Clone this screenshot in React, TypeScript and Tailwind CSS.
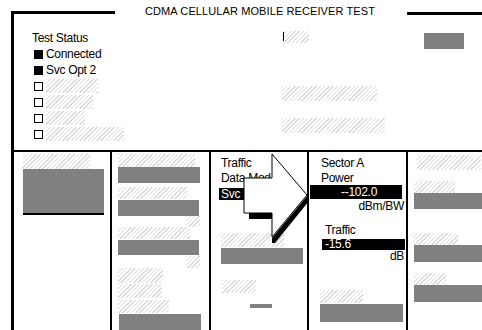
import React from 'react';

// light diagonal hatch used for the blanked-out fields
const HATCH = 'bg-[repeating-linear-gradient(135deg,#dadada_0px,#dadada_1px,#ffffff_1px,#ffffff_3px)]';
const GRAY = 'bg-[#808080]';

function Arrow() {
  return (
    <svg className="absolute left-0 top-0 pointer-events-none" width={482} height={330} viewBox="0 0 482 330">
      {/* shadows */}
      <rect x={249} y={213} width={23} height={6} fill="#000" />
      <polygon points="272,238 307,196 309,201 275,243 272,243" fill="#000" />
      {/* arrow body */}
      <polygon
        points="272,154 307,195 272,237 272,213 244,213 244,178 272,178"
        fill="#fff"
        stroke="#000"
        strokeWidth={1}
      />
    </svg>
  );
}

export default function App() {
  return (
    <div className="relative w-[482px] h-[330px] overflow-hidden bg-white text-black font-['Liberation_Sans',Arial,sans-serif] text-[12px] tracking-[-0.3px]">
      <div className="ml-[11px] mt-[11px] h-[319px] border-l-[3px] border-black flex flex-col">
        {/* title row */}
        <div className="h-[3px] flex items-center shrink-0">
          <div className="w-[101px] h-[3px] bg-black" />
          <span className="ml-[30px] -mt-[3px] text-[11px] leading-none tracking-[0.1px] whitespace-nowrap">
            CDMA CELLULAR MOBILE RECEIVER TEST
          </span>
          <div className="flex-1" />
          <div className="w-[75px] h-[3px] bg-black mt-[2px]" />
        </div>

        {/* upper panel */}
        <div className="h-[136px] flex shrink-0">
          <div className="w-[268px] pl-[18px] pt-[16px] leading-[16px]">
            <div>Test Status</div>
            <div className="flex items-center">
              <div className="w-[9px] h-[9px] bg-black ml-[2px] mr-[3px]" />
              <span>Connected</span>
            </div>
            <div className="flex items-center">
              <div className="w-[9px] h-[9px] bg-black ml-[2px] mr-[3px]" />
              <span>Svc Opt 2</span>
            </div>
            <div className="flex items-center h-[16px]">
              <div className="w-[9px] h-[9px] border border-black ml-[2px] mr-[3px]" />
              <div className={`${HATCH} w-[52px] h-[14px]`} />
            </div>
            <div className="flex items-center h-[16px]">
              <div className="w-[9px] h-[9px] border border-black ml-[2px] mr-[3px]" />
              <div className={`${HATCH} w-[47px] h-[14px]`} />
            </div>
            <div className="flex items-center h-[16px]">
              <div className="w-[9px] h-[9px] border border-black ml-[2px] mr-[3px]" />
              <div className={`${HATCH} w-[39px] h-[14px]`} />
            </div>
            <div className="flex items-center h-[16px]">
              <div className="w-[9px] h-[9px] border border-black ml-[2px] mr-[3px]" />
              <div className={`${HATCH} w-[78px] h-[14px]`} />
            </div>
          </div>

          <div className="w-[142px] pt-[17px]">
            <div className={`${HATCH} w-[27px] h-[12px] pl-[1px] pt-[1px]`}>
              <div className="w-[1px] h-[9px] bg-black" />
            </div>
            <div className={`${HATCH} w-[95px] h-[15px] mt-[43px]`} />
            <div className={`${HATCH} w-[103px] h-[15px] mt-[17px]`} />
          </div>

          <div className="pt-[19px]">
            <div className={`${GRAY} w-[40px] h-[16px]`} />
          </div>
        </div>

        <div className="h-[2px] bg-black shrink-0" />

        {/* lower panel */}
        <div className="flex flex-1">
          {/* column 1 */}
          <div className="w-[96px] pl-[9px] pt-[2px]">
            <div className={`${HATCH} w-[67px] h-[15px]`} />
            <div className={`${GRAY} w-[81px] h-[46px] border-b-2 border-black`} />
          </div>

          {/* column 2 */}
          <div className="w-[99px] border-l-2 border-black pl-[6px] pt-[2px]">
            <div className={`${HATCH} w-[77px] h-[13px]`} />
            <div className={`${GRAY} w-[82px] h-[16px]`} />
            <div className={`${HATCH} w-[69px] h-[12px] mt-[4px]`} />
            <div className={`${GRAY} w-[81px] h-[16px] mt-[1px]`} />
            <div className={`${HATCH} w-[14px] h-[11px] ml-[68px]`} />
            <div className={`${HATCH} w-[72px] h-[12px]`} />
            <div className={`${GRAY} w-[81px] h-[15px] mt-[1px]`} />
            <div className={`${HATCH} w-[14px] h-[12px] ml-[68px] mt-[1px]`} />
            <div className={`${HATCH} w-[45px] h-[15px]`} />
            <div className={`${HATCH} w-[44px] h-[14px] mt-[1px]`} />
            <div className={`${HATCH} w-[51px] h-[13px] mt-[2px]`} />
            <div className={`${GRAY} w-[82px] h-[16px] mt-[1px] ml-[1px]`} />
          </div>

          {/* column 3 */}
          <div className="w-[98px] border-l-2 border-black pl-[10px] pt-[4px]">
            <div className="leading-[15px]">Traffic</div>
            <div className="leading-[15px] whitespace-nowrap">Data Mod</div>
            <div className="-ml-[2px] pl-[2px] mt-[2px] w-[36px] h-[12px] leading-[12px] bg-black text-white">Svc</div>
            <div className={`${HATCH} w-[63px] h-[14px] mt-[33px]`} />
            <div className={`${GRAY} w-[82px] h-[16px] mt-[1px]`} />
            <div className={`${HATCH} w-[34px] h-[13px] mt-[16px] ml-[1px]`} />
            <div className={`${GRAY} w-[22px] h-[4px] mt-[11px] ml-[29px]`} />
          </div>

          {/* column 4 */}
          <div className="w-[99px] border-l-2 border-black pt-[4px]">
            <div className="ml-[12px] leading-[15px]">Sector A</div>
            <div className="ml-[12px] leading-[15px]">Power</div>
            <div className="ml-[1px] -mt-[1px] w-[92px] h-[14px] leading-[14px] bg-black text-white text-right pr-[25px]">--102.0</div>
            <div className="text-right pr-[2px] leading-[12px] mt-[1px]">dBm/BW</div>
            <div className="ml-[16px] leading-[13px] mt-[12px]">Traffic</div>
            <div className="ml-[13px] mt-[2px] w-[83px] h-[11px] leading-[11px] bg-black text-white pl-[3px]">-15.6</div>
            <div className="text-right pr-[2px] leading-[12px]">dB</div>
            <div className={`${HATCH} w-[43px] h-[13px] mt-[28px] ml-[11px]`} />
            <div className={`${GRAY} w-[83px] h-[18px] mt-[1px] ml-[11px]`} />
          </div>

          {/* column 5 */}
          <div className="flex-1 border-l-2 border-black pt-[3px]">
            <div className={`${HATCH} w-[64px] h-[15px] ml-[9px]`} />
            <div className={`${HATCH} w-[41px] h-[12px] mt-[11px] ml-[6px]`} />
            <div className={`${GRAY} h-[16px] ml-[6px]`} />
            <div className={`${HATCH} w-[45px] h-[12px] mt-[24px] ml-[5px]`} />
            <div className={`${GRAY} h-[17px] ml-[6px]`} />
            <div className={`${HATCH} w-[32px] h-[12px] mt-[11px] ml-[6px]`} />
            <div className={`${GRAY} h-[17px] ml-[6px]`} />
          </div>
        </div>
      </div>
      <Arrow />
    </div>
  );
}
